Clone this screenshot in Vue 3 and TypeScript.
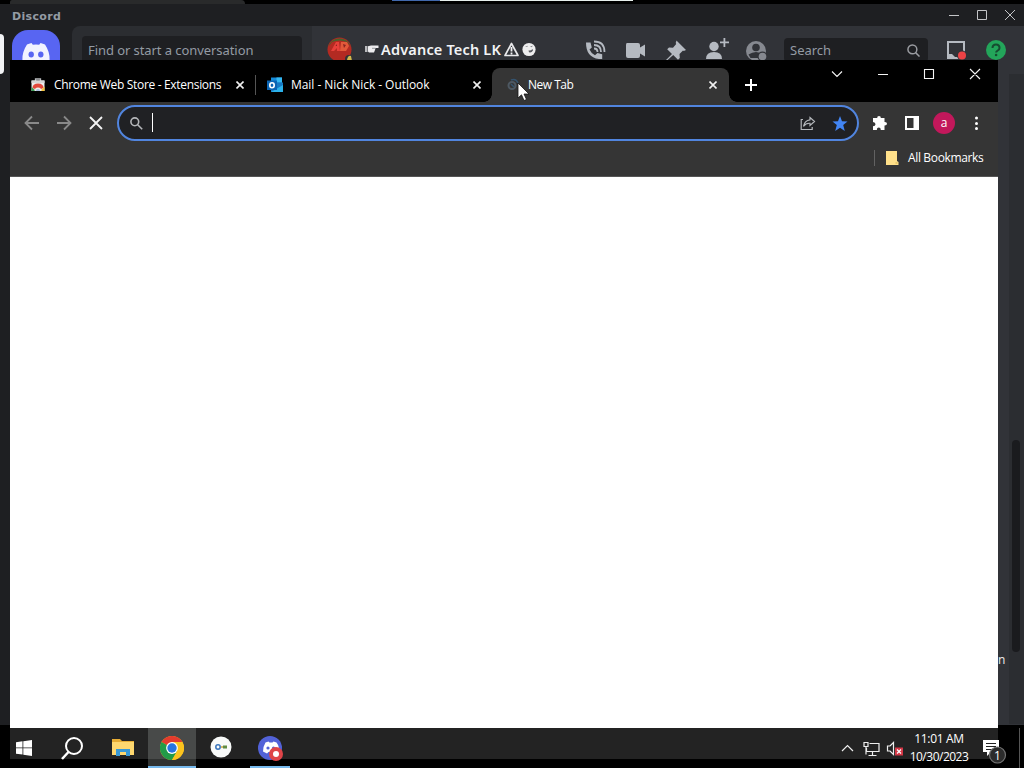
<script setup lang="ts">
interface Tab { title: string; icon: string; cls: string }
const tabs: Tab[] = [
  { title: 'Chrome Web Store - Extensions', icon: 'store', cls: 'first' },
  { title: 'Mail - Nick Nick - Outlook', icon: 'mail', cls: 'second' },
  { title: 'New Tab', icon: 'loading', cls: 'active' },
]
</script>

<template>
  <div class="desktop">
    <div class="sliver"><i class="s-tab"></i><i class="s-blue"></i><i class="s-white"></i></div>

    <section class="discord">
      <header class="d-title">
        <span class="d-name">Discord</span>
        <svg class="d-controls" width="68" height="14" viewBox="0 0 68 14" fill="none" stroke="#c4c5c8">
          <path d="M1 7.500h10M29.500 2.500h9v9h-9zM57 2l10 10M67 2l-10 10" />
        </svg>
      </header>
      <div class="d-main">
        <div class="d-rail">
          <div class="d-logo">
            <svg width="30" height="22" viewBox="0 0 30 22">
              <path d="M6 1.500Q8 .5 10.500 0l1.300 1.800q3.200-.5 6.400 0L19.500 0q2.500.5 4.500 1.500 5 7.500 4.600 15.500-3 2.500-7 3.500L20 18q-5 1.500-10 0l-1.600 2.500q-4-1-7-3.500Q1 9 6 1.500z" fill="#f2f3ff" />
              <ellipse cx="10.200" cy="11.500" rx="2.700" ry="3" fill="#5865f2" /><ellipse cx="19.800" cy="11.500" rx="2.700" ry="3" fill="#5865f2" />
            </svg>
          </div>
        </div>
        <div class="d-side"><div class="d-find">Find or start a conversation</div></div>
        <div class="d-head">
          <svg class="avatar" width="25" height="25" viewBox="0 0 25 25">
            <circle cx="12.500" cy="12.500" r="12" fill="#b32a22" />
            <path d="M1 10A12 12 0 0 1 24 10L20 5Q12 2 5 5z" fill="#48612b" />
            <path d="M4 14L9 5h3l1 9h-3v-3l-3 3z" fill="#e8403a" />
            <path d="M14 5h6l2 4-3 5h-6z" fill="#e2593a" />
            <path d="M8.500 9l1.500-2v2zM16 7l3 1-2 3z" fill="#8a2520" />
            <circle cx="22" cy="22" r="4" fill="#313338" /><path d="M20 23q1-5 4-4l1 5z" fill="#d0b84b" />
          </svg>
          <svg class="hand" width="14" height="10" viewBox="0 0 14 10"><path d="M0 2h2.500v6H0z" fill="#b9babd" /><path d="M3 2.200L6 1.500h7.500V4H10.500l-.5 2-1 2.500H4L3 7.500z" fill="#ececee" /><path d="M7 4.300h3.500" stroke="#74777c" stroke-width=".7" /></svg>
          <span class="d-user">Advance Tech LK</span>
          <svg class="emoji" width="34" height="15" viewBox="0 0 34 15">
            <path d="M7.500 1.500L14 13.500H1z" fill="none" stroke="#e8e8ea" stroke-width="1.700" stroke-linejoin="round" /><path d="M7.500 5v4.500M7.500 10.500v2" stroke="#f2f3f5" stroke-width="1.800" />
            <circle cx="25" cy="7.500" r="6.600" fill="#ededee" /><path d="M21 4.500l2.500-.8v1.300zM26 4.200l3-.4-1.500 1.500z" fill="#85878b" /><path d="M24.500 8.500q2.500.3 4-1.500l.5 1.500q-1.500 2.500-4 1.800z" fill="#5a5c61" />
          </svg>
          <svg class="d-tools" width="186" height="24" viewBox="0 0 186 24" fill="#b5bac1">
            <path d="M1 4.500h4.500l1.300 5-2.300 2q1.700 4 5.500 5.700l2.500-2.200 4.700 1.300V21H14C5 20 1 14 1 4.500z" />
            <g fill="none" stroke="#b5bac1" stroke-width="1.800"><path d="M9 10.500q3.500 0 3.500 3.500M9 7q7 0 7 7" /><path d="M9 3.500q10.500 0 10.500 10.500" /></g>
            <path d="M42 5h11a2 2 0 0 1 2 2v2.500l5-3v12l-5-3V18a2 2 0 0 1-2 2H43a2 2 0 0 1-2-2V7q0-2 1-2z" />
            <path d="M91.500 2.500l9.500 9.500-2.200 1-.8-.5-3.500 3.500.3 4-1.800 1.800-4.800-4.800-6.200 5.500L81 22l6-6-4.800-4.800L84 9.500l4 .3L91.200 6l-.5-1z" />
            <circle cx="129" cy="8.500" r="4.700" /><path d="M121 21q0-7 8-7t8 7zM135 3.500h3.500V0h1.800v3.500h3.700v1.800h-3.700V9h-1.800V5.300H135z" />
            <circle cx="171" cy="13" r="10" fill="#868990" /><circle cx="171" cy="9.500" r="3.800" fill="#313338" /><path d="M163.500 16.500q7.500-5 15 0l-2 3.500h-11z" fill="#313338" /><circle cx="177.500" cy="18.500" r="5" fill="#313338" /><circle cx="177.500" cy="18.500" r="3.800" fill="#868990" />
          </svg>
          <div class="d-search"><span>Search</span><svg width="13" height="13" viewBox="0 0 14 14" fill="none" stroke="#9a9ca1" stroke-width="1.600"><circle cx="5.800" cy="5.800" r="4.800" /><path d="M9 9l4.500 4.500" /></svg></div>
          <svg class="inbox" width="62" height="24" viewBox="0 0 62 24"><path d="M2 2h16v16H2z" fill="none" stroke="#b5bac1" stroke-width="2" /><path d="M2 14h4l3 3v2H2z" fill="#b5bac1" /><circle cx="16" cy="15.500" r="5" fill="#313338" /><circle cx="16" cy="15.500" r="4" fill="#ed4245" /><circle cx="50" cy="10" r="10" fill="#23a55a" /><path d="M46.500 8q0-3.500 3.500-3.500T53.500 8q0 1.500-1.700 2.500T50.100 12.500" fill="none" stroke="#164c30" stroke-width="2" /><circle cx="50.100" cy="15" r="1.300" fill="#164c30" /></svg>
        </div>
      </div>
    </section>
    <i class="pill"></i>
    <i class="scroll-track"></i><i class="scroll-thumb"></i>
    <span class="stray">n</span>

    <section class="chrome">
      <div class="strip">
        <div v-for="t in tabs" :key="t.title" class="tab" :class="t.cls">
          <svg v-if="t.icon === 'store'" class="fav" width="16" height="16" viewBox="0 0 16 16">
            <path d="M5.500 4V2h5v2" fill="none" stroke="#b8babd" stroke-width="1.300" /><path d="M1.500 3.500h13V14h-13z" fill="#eee" /><path d="M1.500 3.500h13v2.500h-13z" fill="#d7d7d7" />
            <path d="M2.500 11q0-4.500 5.500-4.500t5.500 4.500L11 12H5z" fill="#e2493c" /><path d="M1.500 10L6 14H1.500z" fill="#3a9d54" /><path d="M14.500 9.500V14H10z" fill="#f5c33b" /><path d="M4.500 14q0-3.500 3.500-3.500t3.500 3.500z" fill="#f1eee9" /><path d="M6 14q0-2 2-2t2 2z" fill="#a9bfdf" />
          </svg>
          <svg v-else-if="t.icon === 'mail'" class="fav" width="16" height="16" viewBox="0 0 16 16">
            <path d="M4 .5h11v12H4z" fill="#168bd8" /><path d="M9.500.5H15v5H9.500z" fill="#35b8f1" /><path d="M4 5.500h12V15H4z" fill="#1779c3" /><path d="M4 15l12-7v7z" fill="#2bb1ea" /><path d="M0 3.500h10v9.500H0z" fill="#0a64b4" /><ellipse cx="5" cy="8.200" rx="2.200" ry="2.500" fill="none" stroke="#fff" stroke-width="1.600" />
          </svg>
          <svg v-else class="fav" width="16" height="16" viewBox="0 0 16 16" fill="none"><circle cx="7" cy="8.500" r="3.500" stroke="#4e5963" stroke-width="2" /><path d="M6 3q5-2 7 3M6 7l3 3" stroke="#34536e" stroke-width="1.500" /></svg>
          <span class="tab-title">{{ t.title }}</span>
          <svg class="tab-x" width="8" height="8" viewBox="0 0 8 8" stroke="#f0f0f0" stroke-width="1.600"><path d="M.5.5l7 7M7.500.5l-7 7" /></svg>
        </div>
        <svg class="plus" width="12" height="12" viewBox="0 0 12 12" stroke="#fff" stroke-width="2"><path d="M6 0v12M0 6h12" /></svg>
        <svg class="win-controls" width="150" height="14" viewBox="0 0 150 14" fill="none" stroke="#f4f4f4" stroke-width="1.100"><path d="M1 4.500l5 5 5-5M47 7.500h10M93.500 2.500h9v9h-9zM139 2l10 10M149 2l-10 10" /></svg>
      </div>
      <div class="toolbar">
        <svg class="nav" width="80" height="16" viewBox="0 0 80 16" fill="none" stroke-width="1.800"><path d="M15 8H1.500M8 1.500L1.500 8 8 14.500M33 8h13.500M40 1.500L46.500 8 40 14.500" stroke="#898989" /><path d="M66 2l12 12M78 2L66 14" stroke="#f4f4f4" /></svg>
        <div class="omnibox">
          <svg class="lens" width="13" height="13" viewBox="0 0 13 13" fill="none" stroke="#b4b6b9" stroke-width="1.600"><circle cx="4.800" cy="4.800" r="3.900" /><path d="M7.700 7.700l4.500 4.500" /></svg>
          <i class="caret"></i>
          <svg class="share" width="16" height="15" viewBox="0 0 16 15" fill="none" stroke="#b4b7bb" stroke-width="1.200"><path d="M3 3.500H1.200v10h11V11M10 1.500l4.500 4-4.500 4V7.300q-4-.4-6.500 3Q4.500 4.500 10 3.800z" /></svg>
          <svg class="star" width="16" height="15" viewBox="0 0 16 15"><path d="M8 0l2 5.300 5.500.2-4.300 3.600L12.800 15 8 11.700 3.200 15l1.600-5.900L.5 5.500 6 5.300z" fill="#4285f4" /></svg>
        </div>
        <svg class="ext" width="16" height="16" viewBox="0 0 16 16"><path d="M1.500 3h3.700Q5 1 7 1t1.800 2h3.700v4q2.500-.2 2.500 1.700T12.500 10.500V15H8.800q0-2.400-2-2.400T4.800 15H1v-3.800q2.500 0 2.500-2T1 7V3z" fill="#fff" /></svg>
        <svg class="panel" width="14" height="14" viewBox="0 0 14 14"><path d="M0 0h14v14H0z" fill="#fff" /><path d="M2 2h6.500v10H2z" fill="#353535" /></svg>
        <span class="profile">a</span>
        <svg class="dots" width="4" height="14" viewBox="0 0 4 14" fill="#fff"><circle cx="2.500" cy="2" r="1.500" /><circle cx="2.500" cy="7.500" r="1.500" /><circle cx="2.500" cy="12.500" r="1.500" /></svg>
      </div>
      <div class="bookmarks"><i class="divider"></i><svg width="13" height="14" viewBox="0 0 13 14"><path d="M0 0h11v10l1.500 1v3H0z" fill="#ffe08a" /><path d="M9.500 11h2v2h-2z" fill="#e8c86a" /></svg><span>All Bookmarks</span></div>
      <div class="page"></div>
    </section>

    <footer class="taskbar">
      <svg class="start" width="16" height="16" viewBox="0 0 16 16" fill="#fff"><path d="M0 2.200L6.500 1.300v6.200H0zM7.300 1.200L16 0v7.500H7.300zM0 8.300h6.500v6.200L0 13.700zM7.300 8.300H16V16l-8.700-1.300z" /></svg>
      <svg class="find" width="22" height="23" viewBox="0 0 22 23" fill="none" stroke="#fff" stroke-width="2"><circle cx="13" cy="9" r="8" /><path d="M7.500 15L1 22" stroke-width="2.500" /></svg>
      <svg class="folder" width="22" height="19" viewBox="0 0 22 19"><path d="M0 1h8l2 2h12v14H0z" fill="#e7ad35" /><path d="M0 4h22v13H0z" fill="#ffd86f" /><path d="M4 18v-7h14v7h-4v-4H8v4z" fill="#3999d5" /></svg>
      <div class="app running">
        <svg width="24" height="24" viewBox="0 0 24 24"><circle cx="12" cy="12" r="12" fill="#fbc116" /><path d="M12 12L1.600 6A12 12 0 0 1 22.400 6z" fill="#e33b2e" /><path d="M1.600 6A12 12 0 0 0 12 24l5.200-9L12 12z" fill="#229b48" /><path d="M12 6h10.400A12 12 0 0 1 12 24l5.200-9z" fill="#fcc31e" /><circle cx="12" cy="12" r="5.900" fill="#fff" /><circle cx="12" cy="12" r="4.700" fill="#2874e1" /></svg>
      </div>
      <svg class="key" width="22" height="22" viewBox="0 0 22 22"><circle cx="11" cy="11" r="10.500" fill="#f8faf9" /><circle cx="8" cy="11" r="2.200" fill="none" stroke="#3975bc" stroke-width="1.500" /><path d="M11 11h2" stroke="#cda33c" stroke-width="1.500" /><path d="M13 9.500h4v3h-4z" fill="#608d43" /></svg>
      <div class="app disc-app">
        <svg width="26" height="26" viewBox="0 0 26 26"><circle cx="12" cy="12" r="12" fill="#5262d8" /><path d="M7.500 6.500l3-1 1 1h3l1-1 3 1q3 4 2.500 9l-4 2-1.500-1.500h-5L9 17.500l-4-2q0-5 2.500-9z" fill="#fff" /><circle cx="10" cy="12" r="1.600" fill="#5262d8" /><circle cx="15.500" cy="12" r="1.600" fill="#5262d8" /><circle cx="18" cy="18" r="7" fill="#df4448" /><circle cx="18" cy="18" r="3" fill="#fff" /></svg>
      </div>
      <svg class="tray" width="64" height="17" viewBox="0 0 64 17" fill="none" stroke="#eee" stroke-width="1.200"><path d="M1 11l5.500-5.500L12 11M28.500 3.500h9.500v8H25.500V8M31.500 12v3M27.500 15.500h8M23 2.500h4v4h-4zM25 6v8.500M46.500 6H49L52.500 2.500v12L49 11h-2.500z" /><path d="M54 7.500h8v8h-8z" fill="#d43746" stroke="none" /><path d="M56 9.500l4 4M60 9.500l-4 4" stroke="#fff" /></svg>
      <div class="clock"><span class="time">11:01 AM</span><span class="date">10/30/2023</span></div>
      <svg class="notice" width="26" height="26" viewBox="0 0 26 26"><path d="M1 1h16v12H9l-4 4v-4H1z" fill="#fff" /><path d="M4 4.500h10M4 7.500h10M4 10.500h6" stroke="#222" stroke-width="1.200" /><circle cx="15.500" cy="16" r="8" fill="#2c2c2c" stroke="#737373" stroke-width="1.200" /><text x="15.500" y="20.500" class="badge-num" text-anchor="middle">1</text></svg>
      <i class="peek"></i>
    </footer>

    <svg class="cursor" width="13" height="20" viewBox="0 0 13 20"><path d="M1 1v15l3.500-3.200L7 18.500l2.500-1-2.500-5.500h5z" fill="#fff" stroke="#151515" stroke-width=".8" /></svg>
  </div>
</template>

<style scoped>
.desktop { position: relative; width: 1024px; height: 768px; overflow: hidden; background: #000; font-family: "Open Sans", "Noto Sans", sans-serif; color: #fff; }
.desktop svg { display: block; flex: none; }
i { display: block; flex: none; }
.sliver { display: flex; height: 4px; padding-left: 10px; }
.s-tab { width: 235px; height: 4px; margin-right: 147px; background: #292a2b; border-radius: 3px 6px 0 0; }
.s-blue { width: 48px; height: 1px; background: #4168ab; }
.s-white { width: 193px; height: 1px; background: #e7efec; }
.discord { position: absolute; left: 0; top: 4px; width: 1024px; height: 721px; background: #1e1f22; font-family: "Noto Sans", "Open Sans", sans-serif; }
.d-title { display: flex; align-items: center; height: 22px; padding: 0 8px 0 12px; justify-content: space-between; }
.d-name { color: #949ba4; font: 800 11px/22px "DejaVu Sans", sans-serif; letter-spacing: .35px; padding-top: 3px; }
.d-main { display: flex; height: 699px; }
.d-rail { width: 72px; padding: 4px 0 0 12px; box-sizing: border-box; flex: none; }
.d-logo { display: flex; width: 48px; height: 48px; background: #5865f2; border-radius: 16px; justify-content: center; padding-top: 13px; box-sizing: border-box; }
.d-side { width: 240px; background: #2b2d31; border-radius: 8px 0 0; padding: 10px; box-sizing: border-box; flex: none; }
.d-find { background: #1e1f22; height: 28px; border-radius: 4px; color: #949ba4; font-size: 13px; line-height: 28px; padding-left: 6px; white-space: nowrap; letter-spacing: -.07px; }
.d-head { display: flex; flex: 1; align-items: flex-start; background: #313338; }
.avatar { margin: 11px 0 0 15px; }
.hand { margin: 18px 0 0 13px; }
.d-user { width: 120px; margin: 11px 0 0 2px; font-size: 14.5px; line-height: 24px; font-weight: 600; white-space: nowrap; letter-spacing: .18px; color: #f2f3f5; }
.emoji { margin: 16px 0 0 3px; }
.d-tools { margin: 12px 0 0 47px; }
.d-search { display: flex; align-items: center; justify-content: space-between; width: 144px; height: 24px; box-sizing: border-box; padding: 0 8px 0 6px; margin: 12px 0 0 13px; background: #1e1f22; border-radius: 4px; font-size: 13px; color: #949ba4; }
.inbox { margin: 14px 0 0 18px; }
.pill { position: absolute; left: 0; top: 34px; width: 4px; height: 40px; background: #f2f3f5; border-radius: 0 4px 4px 0; }
.scroll-track { position: absolute; left: 1009px; top: 74px; width: 15px; height: 650px; background: #2b2d31; }
.scroll-thumb { position: absolute; left: 1012px; top: 440px; width: 8px; height: 212px; border-radius: 4px; background: #1a1b1e; }
.stray { position: absolute; left: 998px; top: 652px; font-size: 12px; line-height: 16px; color: #eee; }
.chrome { position: absolute; left: 10px; top: 60px; width: 988px; height: 668px; background: #353535; }
.strip { display: flex; height: 42px; background: #000; position: relative; }
.tab { display: flex; align-items: center; height: 34px; box-sizing: border-box; margin-top: 8px; font-size: 12px; white-space: nowrap; }
.first { width: 246px; padding: 0 12px 0 20px; position: relative; }
.first::after { content: ""; position: absolute; right: 0; top: 7px; width: 1px; height: 20px; background: #555; }
.second { width: 236px; padding: 0 11px; }
.active { width: 237px; padding: 0 12px 0 13px; background: #353535; border-radius: 8px 8px 0 0; position: relative; }
.active::before, .active::after { content: ""; position: absolute; bottom: 0; width: 8px; height: 8px; }
.active::before { left: -8px; background: radial-gradient(circle at 0 0, transparent 7.500px, #353535 8px); }
.active::after { right: -8px; background: radial-gradient(circle at 100% 0, transparent 7.500px, #353535 8px); }
.tab-title { margin-left: 8px; flex: 1; padding-bottom: 1px; }
.first .tab-title { letter-spacing: -.32px; }
.second .tab-title { letter-spacing: -.05px; }
.active .tab-title { margin-left: 7px; letter-spacing: -.5px; }
.plus { margin: 19px 0 0 16px; }
.win-controls { margin: 7px 17px 0 auto; }
.toolbar { display: flex; align-items: center; height: 42px; }
.nav { margin-left: 14px; }
.omnibox { display: flex; align-items: center; width: 742px; height: 36px; box-sizing: border-box; border: 2px solid #5185df; background: #202124; border-radius: 18px; margin-left: 13px; padding: 0 9px 0 11px; }
.caret { width: 1px; height: 19px; margin-left: 9px; background: #fff; position: relative; top: -1px; margin-right: auto; }
.star { margin-left: 16px; }
.ext { margin-left: 13px; }
.panel { margin-left: 17px; }
.profile { width: 22px; height: 22px; margin-left: 14px; border-radius: 50%; background: #c2185b; text-align: center; font-size: 12px; line-height: 21px; }
.dots { margin-left: 19px; }
.bookmarks { display: flex; align-items: center; justify-content: flex-end; box-sizing: border-box; height: 33px; border-bottom: 1px solid #555; padding: 0 14px 5px 0; font-size: 12px; letter-spacing: -.35px; }
.bookmarks .divider { width: 1px; height: 16px; background: #626262; margin-right: 11px; }
.bookmarks span { width: 76px; margin-left: 9px; white-space: nowrap; }
.page { height: 551px; background: #fff; }
.taskbar { position: absolute; left: 10px; top: 728px; width: 1014px; height: 40px; display: flex; align-items: flex-start; background: linear-gradient(#232323, #232323) 0 0 / 988px 31px no-repeat #000; }
.start { margin: 12px 0 0 6px; }
.find { margin: 9px 0 0 29px; }
.folder { margin: 10px 0 0 29px; }
.app { display: flex; box-sizing: border-box; height: 40px; border-bottom: 2px solid #76b9ed; justify-content: center; padding-top: 8px; flex: none; }
.running { width: 48px; margin-left: 14px; background: linear-gradient(#484a49 31px, #303231 31px); }
.key { margin: 8px 0 0 14px; }
.disc-app { width: 40px; margin-left: 18px; padding-left: 2px; }
.tray { margin: 12px 0 0 551px; }
.clock { display: flex; flex-direction: column; align-items: center; width: 64px; margin: 2px 0 0 2px; font-size: 12px; line-height: 18px; white-space: nowrap; letter-spacing: -.5px; }
.time { letter-spacing: -.35px; }
.notice { margin: 11px 0 0 11px; }
.badge-num { font: 12px "Open Sans", sans-serif; fill: #fff; }
.peek { width: 1px; height: 40px; margin-left: 11px; background: #555; }
.cursor { position: absolute; left: 517px; top: 82px; }
</style>
